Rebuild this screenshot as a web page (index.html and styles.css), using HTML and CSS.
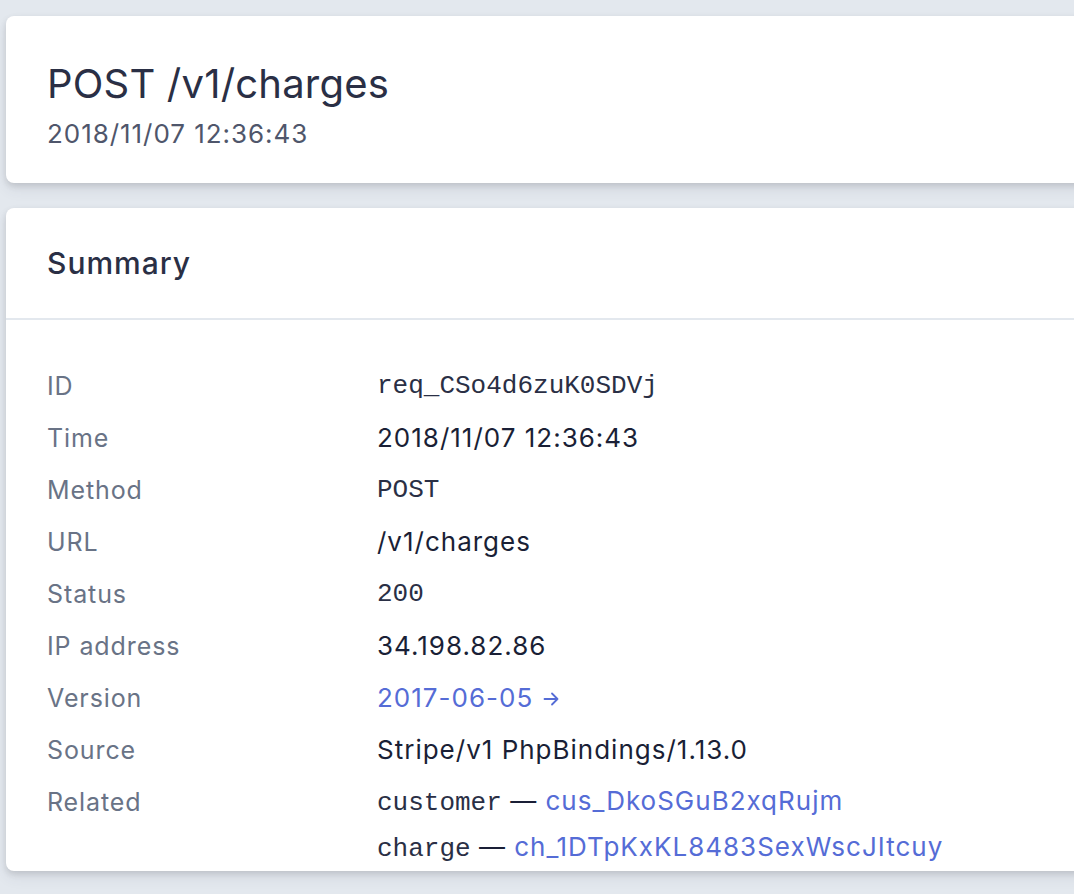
FILE: index.html
```html
<!DOCTYPE html>
<html lang="en">
  <head>
    <meta charset="UTF-8" />
    <meta name="viewport" content="width=device-width, initial-scale=1.0" />
    <title>POST /v1/charges</title>
    <link rel="stylesheet" href="styles.css">
  </head>
  <body>
    <main class="page">
      <header class="card title-card">
        <h1>POST /v1/charges</h1>
        <p class="subtitle">2018/11/07 12:36:43</p>
      </header>
      <section class="card">
        <div class="card-head">
          <h2>Summary</h2>
        </div>
        <dl class="summary">
          <div class="row">
            <dt>ID</dt>
            <dd class="mono">req_CSo4d6zuK0SDVj</dd>
          </div>
          <div class="row">
            <dt>Time</dt>
            <dd>2018/11/07 12:36:43</dd>
          </div>
          <div class="row">
            <dt>Method</dt>
            <dd class="mono">POST</dd>
          </div>
          <div class="row">
            <dt>URL</dt>
            <dd>/v1/charges</dd>
          </div>
          <div class="row">
            <dt>Status</dt>
            <dd class="mono">200</dd>
          </div>
          <div class="row">
            <dt>IP address</dt>
            <dd>34.198.82.86</dd>
          </div>
          <div class="row">
            <dt>Version</dt>
            <dd>
              <a href="#" class="version">2017-06-05
                <svg class="arrow" width="17" height="16" viewBox="0 0 17 16" fill="none" stroke="currentColor" stroke-width="1.8" stroke-linecap="round" stroke-linejoin="round">
                  <path d="M1.5 8h13M9 2.5L14.5 8 9 13.5" />
                </svg>
              </a>
            </dd>
          </div>
          <div class="row">
            <dt>Source</dt>
            <dd>Stripe/v1 PhpBindings/1.13.0</dd>
          </div>
          <div class="row">
            <dt>Related</dt>
            <dd>
              <div class="related"><span class="mono">customer</span> &mdash; <a href="#">cus_DkoSGuB2xqRujm</a></div>
              <div class="related"><span class="mono">charge</span> &mdash; <a href="#">ch_1DTpKxKL8483SexWscJItcuy</a></div>
            </dd>
          </div>
        </dl>
      </section>
    </main>
  </body>
</html>
```

FILE: styles.css
```css
* {
  padding: 0;
  margin: 0;
  box-sizing: border-box;
}

body {
  height: 100vh;
  overflow: hidden;
  background: #e3e8ee;
  font-family: Inter, "Noto Sans", sans-serif;
  color: #1a1f36;
}

.page {
  display: flex;
  flex-direction: column;
  gap: 25px;
  width: 1200px;
  padding: 16px 0 0 6px;
}

.card {
  background: #fff;
  border-radius: 8px;
  box-shadow: 0 7px 14px rgba(60, 66, 87, 0.08), 0 3px 6px rgba(0, 0, 0, 0.12);
}

.title-card {
  height: 167px;
  padding: 44px 0 0 41px;
}

h1 {
  font-size: 40px;
  font-weight: 400;
  line-height: 48px;
  letter-spacing: 0.2px;
  color: #2a2f45;
}

.subtitle {
  margin-top: 10px;
  font-size: 26px;
  line-height: 32px;
  letter-spacing: 0.95px;
  color: #4f566b;
}

.card-head {
  height: 112px;
  padding-left: 41px;
  display: flex;
  align-items: center;
  border-bottom: 2px solid #e3e8ee;
}

h2 {
  font-size: 30px;
  font-weight: 500;
  letter-spacing: 1px;
  color: #2a2f45;
}

.summary {
  padding: 40px 0 0 41px;
}

.row {
  display: flex;
  font-size: 26px;
  line-height: 52px;
  letter-spacing: 1px;
}

dt {
  width: 330px;
  font-size: 25px;
  letter-spacing: 0.9px;
  color: #697386;
}

dd {
  color: #1a1f36;
}

.mono {
  font-family: "Liberation Mono", "DejaVu Sans Mono", monospace;
  letter-spacing: 0;
  color: #2a2f45;
}

.related {
  line-height: 44px;
}

.related:first-child {
  margin-top: 3px;
}

a {
  color: #556cd6;
  text-decoration: none;
}

.version {
  display: inline-flex;
  align-items: center;
  gap: 10px;
}

.arrow {
  margin-top: 2px;
}
```
